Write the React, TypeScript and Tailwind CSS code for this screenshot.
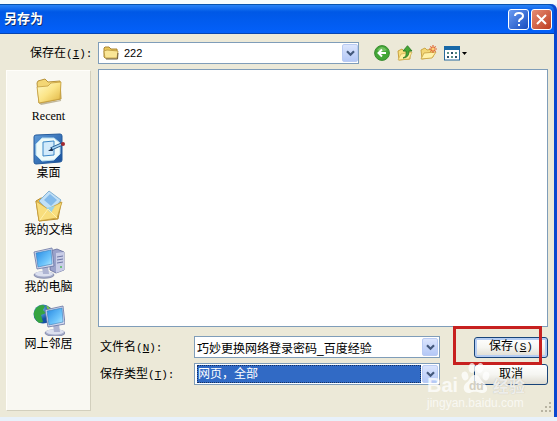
import type { ReactNode } from "react";

const cjk = "font-['Liberation_Sans','Noto_Sans_CJK_SC',sans-serif]";

function Chevron() {
  return (
    <span className="flex h-[18px] w-4 items-center justify-center rounded-xs border border-[#b9cbf3] bg-linear-to-b from-[#dbe5fd] to-[#b4c8f6]">
      <svg width="9" height="7" viewBox="0 0 9 7" aria-hidden="true">
        <path d="M1 1.2 4.5 4.7 8 1.2" fill="none" stroke="#44597c" strokeWidth="2.2" />
      </svg>
    </span>
  );
}

function Hotkey({ letter, colon = true }: { letter: string; colon?: boolean }) {
  return (
    <span className="font-['Liberation_Mono',monospace] text-[11px]">
      (<u className="underline-offset-1">{letter}</u>){colon && ":"}
    </span>
  );
}

function FolderIcon() {
  return (
    <svg width="32" height="32" viewBox="0 0 32 32" aria-hidden="true">
      <defs>
        <linearGradient id="folder" x1="0" y1="0" x2="1" y2="1">
          <stop offset="0" stopColor="#fffbcb" />
          <stop offset=".5" stopColor="#fbe487" />
          <stop offset="1" stopColor="#dfb33e" />
        </linearGradient>
      </defs>
      <path d="M6 27 28 24 29 8 28 25 8 29Z" fill="#9a8a60" opacity=".6" />
      <path d="M4 7 5 5 12 3 15 6 27 5 28 23 6 27Z" fill="#f3d675" stroke="#b8943c" />
      <path d="M4 11 15 10 18 7 28 6 27 23 6 27Z" fill="url(#folder)" stroke="#c49d3e" strokeWidth=".8" />
    </svg>
  );
}

function DesktopIcon() {
  return (
    <svg width="32" height="32" viewBox="0 0 32 32" aria-hidden="true">
      <defs>
        <linearGradient id="desk" x1="0" y1="0" x2="1" y2="1">
          <stop offset="0" stopColor="#5f9bd8" />
          <stop offset="1" stopColor="#164f9b" />
        </linearGradient>
      </defs>
      <path d="M1 4 Q1 2 3 2 L27 1 Q29 1 29 3 V27 Q29 29 27 29 L3 31 Q1 31 1 29Z" fill="url(#desk)" stroke="#245b9c" />
      <path d="M9 5H21L27 10V21L21 27 9 28 3 22V11Z" fill="#eefaf9" stroke="#b5dcf0" />
      <path d="M10 9 21 8V22L10 23Z" fill="#d2ebfb" stroke="#3b87c6" />
      <path d="M18 16 29 11" stroke="#235990" strokeWidth="3.5" />
      <path d="M19 15.5 28 11.5" stroke="#a8d7f4" strokeWidth="1.5" />
      <path d="m15 18 4-3 1 3Z" fill="#172e50" />
      <circle cx="30" cy="11" r="2" fill="#a12730" />
    </svg>
  );
}

function DocumentsIcon() {
  return (
    <svg width="32" height="32" viewBox="0 0 32 32" aria-hidden="true">
      <path d="M3 11 8 8 26 10 28 13 25 29 6 31Z" fill="#e9bd49" stroke="#b78d2f" />
      <path d="m6 11 10-10 12 9-10 14Z" fill="#c1e0f7" stroke="#84b1d2" />
      <path d="m11 10 6-6 7 6-6 6Z" fill="#83baea" />
      <path d="M3 11 15 19 29 12 24 28 6 31Z" fill="#f8dd7c" stroke="#c49a38" strokeWidth=".8" />
      <path d="m13 18 9-2-4 7Z" fill="#9bd2e6" />
      <path d="M7 30 15 19 24 28" fill="none" stroke="#fff0ac" />
    </svg>
  );
}

function Monitor() {
  return (
    <>
      <ellipse cx="11" cy="28" rx="10" ry="3.3" fill="#a5acc9" stroke="#737a9d" strokeWidth=".7" />
      <ellipse cx="11" cy="26.8" rx="9" ry="2.6" fill="#dce0ef" />
      <path d="m9 20 6-1 1 8H10Z" fill="#aeb4d2" />
      <path d="M1 5 19 1 21 19 4 22Z" fill="#d5daee" stroke="#6672a2" strokeWidth=".8" />
      <path d="M3 6 18 3 19 17 5 20Z" fill="url(#screen)" stroke="#397db8" strokeWidth=".6" />
    </>
  );
}

function ScreenGradient() {
  return (
    <defs>
      <linearGradient id="screen" x1="0" y1="0" x2="1" y2="1">
        <stop offset="0" stopColor="#2588e2" />
        <stop offset=".65" stopColor="#70c6fc" />
        <stop offset="1" stopColor="#bdedff" />
      </linearGradient>
    </defs>
  );
}

function ComputerIcon() {
  return (
    <svg width="32" height="32" viewBox="0 0 32 32" aria-hidden="true">
      <ScreenGradient />
      <path d="m17 4 7-2 7 3v18l-8 3-6-3Z" fill="#9ba2ca" stroke="#626b99" strokeWidth=".8" />
      <path d="m23 6 8-1v18l-8 3Z" fill="#c9cde7" />
      <path d="m24 10 6-1m-6 4 6-1m-6 4 6-1" stroke="#6d76a4" />
      <circle cx="28" cy="20" r="1" fill="#50b95f" />
      <Monitor />
    </svg>
  );
}

function NetworkIcon() {
  return (
    <svg width="32" height="32" viewBox="0 0 32 32" aria-hidden="true">
      <defs>
        <radialGradient id="globe" cx=".35" cy=".3">
          <stop offset="0" stopColor="#7ecaf4" />
          <stop offset="1" stopColor="#1652a3" />
        </radialGradient>
      </defs>
      <circle cx="10" cy="10" r="9.5" fill="url(#globe)" />
      <path d="M3 4Q8-1 12 2L10 6 13 9 8 11 10 18 6 19Q0 14 1 8Z" fill="#36a441" />
      <path d="m13 1 5 4-3 2Z" fill="#81c845" />
      <g transform="translate(11 1)">
        <Monitor />
      </g>
    </svg>
  );
}

function Place({ label, serif, children }: { label: string; serif?: boolean; children: ReactNode }) {
  return (
    <button type="button" className="flex h-[57px] w-full flex-col items-center">
      {children}
      <span className={serif ? "font-['Liberation_Serif',serif] text-xs leading-4" : "text-xs leading-4"}>{label}</span>
    </button>
  );
}

function SmallFolder() {
  return (
    <svg width="16" height="16" viewBox="0 0 16 16" aria-hidden="true">
      <path d="M1 3 2 2H6L8 4H14V13H2L1 12Z" fill="#e9c657" stroke="#a88434" />
      <path d="M2 13 1 6 4 5 15 6 14 13Z" fill="#fae696" stroke="#b8963d" strokeWidth=".8" />
      <path d="M3 14H14.5L15 8" fill="none" stroke="#73613a" />
    </svg>
  );
}

function Toolbar() {
  return (
    <div className="flex items-center gap-[7px]">
      <button type="button" aria-label="后退">
        <svg width="16" height="16" viewBox="0 0 16 16">
          <circle cx="8" cy="8" r="7.4" fill="#43a636" stroke="#398c31" />
          <path d="M3 5Q8-1 13 5Q8 8 3 5" fill="#8acf78" opacity=".65" />
          <path d="M12 8H5M8 4.5 4.5 8 8 11.5" fill="none" stroke="#fff" strokeWidth="2" />
        </svg>
      </button>
      <button type="button" aria-label="向上一级">
        <svg width="16" height="16" viewBox="0 0 16 16">
          <path d="M1 6 5 4 7 6 13 5V14L2 15Z" fill="#f7df7b" stroke="#c8a13f" />
          <path d="M1 15 4 9 15 7 12 14Z" fill="#fff0a0" stroke="#d0ae50" strokeWidth=".7" />
          <path d="M6 13Q10 12 9 6H6L10.500 .7 15 6H12Q12 13 6 13Z" fill="#46a735" stroke="#267521" strokeWidth=".8" />
        </svg>
      </button>
      <button type="button" aria-label="新建文件夹">
        <svg width="17" height="16" viewBox="0 0 17 16">
          <path d="M1 5 5 3 7 5 13 4V12L2 14Z" fill="#f3d777" stroke="#cba746" />
          <path d="M1 14 4 8 16 7 12 13Z" fill="#fff2aa" stroke="#d0ac4e" />
          <path d="M13 0V8M9 4H17M10.300 1.300 15.700 6.700M15.700 1.300 10.300 6.700" stroke="#e06b39" strokeWidth="1.2" />
          <circle cx="13" cy="4" r="1.500" fill="#ffd178" />
        </svg>
      </button>
      <button type="button" aria-label="查看" className="flex items-center gap-[2px]">
        <svg width="16" height="15" viewBox="0 0 16 15">
          <rect x=".5" y=".5" width="15" height="13.500" fill="#fff" stroke="#276b9e" />
          <path d="M0 0H16V4H0Z" fill="#1868a7" />
          <path d="M3 6H5V8H3ZM11 6H13V8H11ZM7 10H9V12H7Z" fill="#5c9386" />
          <path d="M7 6H9V8H7ZM3 10H5V12H3ZM11 10H13V12H11Z" fill="#2a5169" />
        </svg>
        <svg width="5" height="3" viewBox="0 0 5 3">
          <path d="M0 0H5L2.500 3Z" fill="#000" />
        </svg>
      </button>
    </div>
  );
}

function Watermark() {
  return (
    <div aria-hidden="true" className="pointer-events-none absolute top-[36px] right-[23px] w-[98px] whitespace-nowrap text-white/75">
      <div className="flex h-8 items-end justify-between">
        <span className="text-xl leading-5 font-bold">Bai</span>
        <svg width="29" height="32" viewBox="0 0 29 32" fill="currentColor" className="shrink-0">
          <ellipse cx="4" cy="13" rx="3.300" ry="4.500" transform="rotate(-15 4 13)" />
          <ellipse cx="11" cy="5" rx="3.500" ry="5" />
          <ellipse cx="19" cy="5" rx="3.500" ry="5" transform="rotate(12 19 5)" />
          <ellipse cx="25" cy="13" rx="3.300" ry="4.500" transform="rotate(15 25 13)" />
          <path d="M14 12C9 12 9 18 5 20C0 25 4 31 9 30C13 28 16 29 20 30C27 31 28 24 23 20C19 17 19 12 14 12Z" />
          <text x="8" y="27" fontSize="12" fontWeight="bold" fontFamily="Liberation Sans" fill="#d3cfc1">du</text>
        </svg>
        <span className="text-base leading-4 font-bold [text-shadow:0_0_1px_#b8b6aa]">经验</span>
      </div>
      <div className="text-xs leading-4 text-white/70">jingyan.baidu.com</div>
    </div>
  );
}

const dialogButton =
  "h-[21px] w-full rounded-[3px] border border-[#184479] bg-linear-to-b from-white via-[#f5f5f1] to-[#dedbd0] pb-[2px] text-xs leading-4";

export default function App() {
  return (
    <div className={`${cjk} w-full bg-[#e8f1fa] text-xs text-black`}>
      <div className="h-1 bg-[#f5fcfd]" />
      <div className="rounded-tr-md border-r-[3px] border-[#0947cf] bg-[#0947cf]">
        <header className="flex h-[30px] items-center justify-between rounded-tr-md border-t border-b border-t-[#0754ad] border-b-[#0644b0] bg-linear-to-b from-[#2783f6] via-[#0058e6] via-25% to-[#0360fa] pr-[2px] pl-1">
          <h1 className="text-[13px] font-bold text-white [text-shadow:1px_1px_#0b3073]">另存为</h1>
          <div className="flex gap-[2px]">
            <button type="button" aria-label="帮助" className="flex size-[21px] items-center justify-center rounded-[3px] border border-white bg-linear-to-br from-[#6b9bf1] to-[#174bbf]">
              <svg width="12" height="15" viewBox="0 0 12 15" fill="none" stroke="#fff" strokeWidth="2">
                <path d="M2 4Q2 1 6 1T10 4Q10 6 7 7.500Q6 8 6 10" />
                <path d="M6 12V14" />
              </svg>
            </button>
            <button type="button" aria-label="关闭" className="flex size-[21px] items-center justify-center rounded-[3px] border border-white bg-linear-to-br from-[#e58c73] to-[#bd3a1d]">
              <svg width="13" height="13" viewBox="0 0 13 13" fill="none" stroke="#fff" strokeWidth="2">
                <path d="M2 2 11 11M11 2 2 11" />
              </svg>
            </button>
          </div>
        </header>

        <main className="bg-[#ece9d8] pt-2 pr-[6px] pb-[6px] pl-[6px]">
          <div className="flex items-center">
            <label htmlFor="folder-select" className="w-[92px] shrink-0 pl-6 leading-4">
              保存在<Hotkey letter="I" />
            </label>
            <div className="relative min-w-0 flex-1">
              <select id="folder-select" className="block h-[22px] w-full appearance-none border border-[#7f9db9] bg-white pl-[25px] text-[11px]">
                <option>222</option>
              </select>
              <span className="pointer-events-none absolute inset-y-0 left-[5px] flex items-center"><SmallFolder /></span>
              <span className="pointer-events-none absolute inset-y-0 right-px flex items-center"><Chevron /></span>
            </div>
            <div className="w-[189px] shrink-0 pl-[15px]"><Toolbar /></div>
          </div>

          <div className="mt-[5px] flex gap-[7px]">
            <nav className="mt-px w-[85px] shrink-0 border border-t-[#fffefa] border-r-[#d2cfbd] border-b-[#d2cfbd] border-l-[#fffefa] bg-[#f9f8f2] pt-[5px]">
              <Place label="Recent" serif><FolderIcon /></Place>
              <Place label="桌面"><DesktopIcon /></Place>
              <Place label="我的文档"><DocumentsIcon /></Place>
              <Place label="我的电脑"><ComputerIcon /></Place>
              <Place label="网上邻居"><NetworkIcon /></Place>
            </nav>

            <div className="min-w-0 flex-1">
              <div role="listbox" aria-label="文件" className="h-[258px] border border-[#7f9db9] bg-white" />
              <div className="relative flex gap-[34px] pt-[9px] pb-[26px]">
                <div className="flex min-w-0 flex-1 flex-col gap-[5px]">
                  <div className="flex items-center">
                    <label htmlFor="file-name" className="w-24 shrink-0 pl-[2px] leading-4">
                      文件名<Hotkey letter="N" />
                    </label>
                    <div className="flex h-[22px] min-w-0 flex-1 items-center border border-[#7f9db9] bg-white pr-px">
                      <input id="file-name" defaultValue="巧妙更换网络登录密码_百度经验" className="h-full min-w-0 flex-1 pl-[2px] text-xs outline-none" />
                      <button type="button" aria-label="文件名列表"><Chevron /></button>
                    </div>
                  </div>
                  <div className="flex items-center">
                    <label htmlFor="file-type" className="w-24 shrink-0 pl-[2px] leading-4">
                      保存类型<Hotkey letter="T" />
                    </label>
                    <div className="relative h-[22px] min-w-0 flex-1 border border-[#7f9db9] bg-white py-px pr-[18px] pl-[2px]">
                      <select id="file-type" className="block h-full w-full appearance-none border border-dotted border-[#14305f] bg-[#316ac5] text-xs text-white">
                        <option>网页，全部</option>
                      </select>
                      <span className="pointer-events-none absolute inset-y-0 right-px flex items-center"><Chevron /></span>
                    </div>
                  </div>
                </div>
                <div className="flex w-[74px] shrink-0 flex-col gap-[6px] pt-px">
                  <div className="relative">
                    <button type="submit" className={`${dialogButton} shadow-[inset_0_0_0_2px_#b5cdf3]`}>
                      保存<Hotkey letter="S" colon={false} />
                    </button>
                    <span className="pointer-events-none absolute -top-[11px] right-[6px] -bottom-[7px] -left-[21px] border-3 border-[#c7201f]" />
                  </div>
                  <button type="button" className={dialogButton}>取消</button>
                </div>
                <Watermark />
              </div>
            </div>
          </div>
          <div className="-mt-[6px] flex h-[6px] justify-end">
            <svg width="12" height="12" viewBox="0 0 12 12" className="mt-[-3px] -mr-[4px]" aria-hidden="true">
              <path d="M9 0H11V2H9ZM5 4H7V6H5ZM9 4H11V6H9ZM1 8H3V10H1ZM5 8H7V10H5ZM9 8H11V10H9Z" fill="#b8b4a2" />
            </svg>
          </div>
        </main>
      </div>
      <div className="mr-[3px] h-1" />
    </div>
  );
}
